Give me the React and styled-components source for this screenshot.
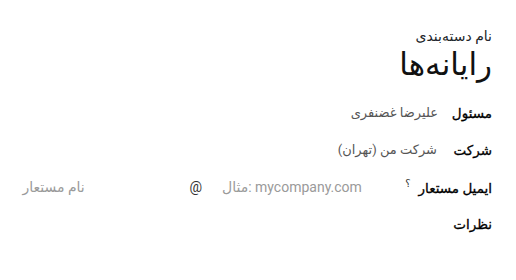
import React from 'react';
import styled, { createGlobalStyle } from 'styled-components';

const GlobalStyle = createGlobalStyle`
  html, body {
    margin: 0;
    padding: 0;
    background: #fff;
  }
  body {
    font-family: Roboto, "Noto Sans", "DejaVu Sans", sans-serif;
    color: #212529;
  }
`;

const Sheet = styled.div`
  direction: rtl;
  width: 516px;
  height: 280px;
  box-sizing: border-box;
  padding: 27px 24px 0 10px;
`;

const TitleBlock = styled.div`
  display: flex;
  flex-direction: column;
  margin-bottom: 9px;
`;

const Caption = styled.div`
  font-size: 14px;
  line-height: 18px;
  color: #212529;
`;

const Title = styled.h1`
  margin: 0;
  font-size: 31px;
  font-weight: 400;
  line-height: 40px;
  color: #111;
`;

const Row = styled.div`
  display: flex;
  align-items: center;
  height: 37px;
`;

const Label = styled.div`
  width: ${p => p.$width || 54}px;
  flex: none;
  font-size: 13.5px;
  font-weight: 500;
  color: #000;
  -webkit-text-stroke: 0.3px #000;
  white-space: nowrap;
`;

const Help = styled.sup`
  font-size: 10px;
  font-weight: 400;
  margin-right: 8px;
  color: #333;
  -webkit-text-stroke: 0;
`;

const Value = styled.div`
  font-size: 13px;
  color: #555;
  white-space: nowrap;
`;

const AliasGroup = styled.div`
  display: flex;
  align-items: center;
  font-size: 14px;
`;

const AliasInput = styled.div`
  width: ${p => p.$width}px;
  flex: none;
  direction: ltr;
  text-align: left;
  color: #9a9a9a;
  white-space: nowrap;
`;

const At = styled.span`
  flex: none;
  padding: 0 20px;
  color: #333;
`;

export default function App() {
  return (
    <>
      <GlobalStyle />
      <Sheet>
        <TitleBlock>
          <Caption>نام دسته‌بندی</Caption>
          <Title>رایانه‌ها</Title>
        </TitleBlock>
        <Row>
          <Label $width={54}>مسئول</Label>
          <Value>علیرضا غضنفری</Value>
        </Row>
        <Row>
          <Label $width={55}>شرکت</Label>
          <Value>شرکت من (تهران)</Value>
        </Row>
        <Row>
          <Label $width={130}>
            ایمیل مستعار<Help>؟</Help>
          </Label>
          <AliasGroup>
            <AliasInput $width={140}>مثال: mycompany.com</AliasInput>
            <At>@</At>
            <AliasInput $width={147}>نام مستعار</AliasInput>
          </AliasGroup>
        </Row>
        <Row>
          <Label>نظرات</Label>
        </Row>
      </Sheet>
    </>
  );
}
